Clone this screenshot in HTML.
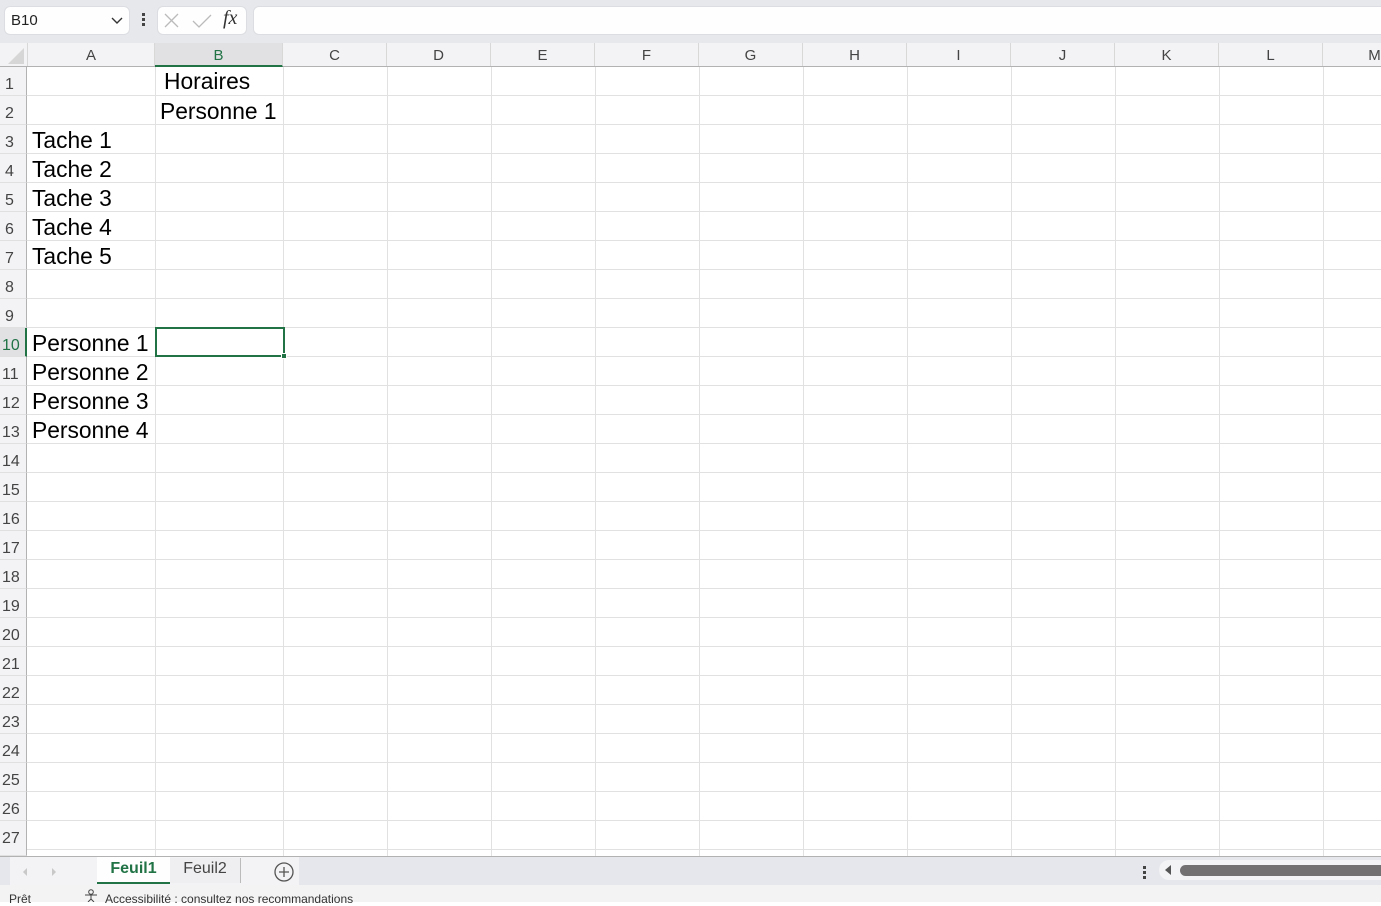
<!DOCTYPE html>
<html><head><meta charset="utf-8"><style>
*{margin:0;padding:0;box-sizing:border-box}
body{width:1381px;height:902px;overflow:hidden;background:#fff;font-family:"Liberation Sans",Arial,sans-serif;position:relative}
.a{position:absolute}
.top{left:0;top:0;width:1381px;height:43px;background:#e7e8ec}
.box{background:#fdfefd;border:1px solid #dcdde2;border-radius:6px}
.hdr{left:0;top:43px;width:1381px;height:24px;background:#f3f2f5;border-bottom:1px solid #b2b2b2}
.ch{top:43px;height:23px;font-size:15px;color:#444;text-align:center;line-height:26px;border-right:1px solid #d8d8d8}
.rh{left:0;width:27px;height:29px;font-size:16px;color:#444;background:#f3f2f5;border-right:1px solid #b2b2b2;border-bottom:1px solid #e0e0e0;padding-left:5px;line-height:35px}
.grid{left:27px;top:67px;width:1354px;height:789px;background:repeating-linear-gradient(to bottom,transparent 0,transparent 28px,#e1e1e1 28px,#e1e1e1 29px)}
.v{top:67px;width:1px;height:789px;background:#e1e1e1}
.t{font-size:22.8px;color:#000;white-space:nowrap}
</style></head><body>
<div class="a top"></div>
<div class="a box" style="left:4px;top:6px;width:126px;height:29px;"></div>
<div class="a" style="left:11px;top:12px;font-size:15px;color:#222">B10</div>
<svg class="a" style="left:110px;top:15px" width="14" height="10"><path d="M2 3 L7 8 L12 3" stroke="#333" stroke-width="1.4" fill="none"/></svg>
<div class="a" style="left:142px;top:13px;width:3px;height:3px;background:#444;box-shadow:0 5px 0 #444,0 10px 0 #444"></div>
<div class="a box" style="left:157px;top:6px;width:90px;height:29px;"></div>
<svg class="a" style="left:163px;top:12px" width="18" height="18"><path d="M2 2 L15 15 M15 2 L2 15" stroke="#bbb" stroke-width="1.3"/></svg>
<svg class="a" style="left:191px;top:12px" width="22" height="18"><path d="M2 9 L8 15 L20 3" stroke="#bbb" stroke-width="1.3" fill="none"/></svg>
<div class="a" style="left:223px;top:7px;font-family:'Liberation Serif',serif;font-style:italic;font-size:20px;color:#333">fx</div>
<div class="a box" style="left:253px;top:6px;width:1140px;height:29px;"></div>

<div class="a hdr"></div>
<svg class="a" style="left:6px;top:48px" width="18" height="16"><path d="M18 0 L18 16 L2 16 Z" fill="#d6d6d6"/></svg>
<div class="a ch" style="left:27px;width:128px;border-left:1px solid #d8d8d8">A</div>
<div class="a ch" style="left:155px;width:128px;background:#e1e1e4;color:#217346;border-bottom:2px solid #217346;height:24px">B</div>
<div class="a ch" style="left:283px;width:104px">C</div>
<div class="a ch" style="left:387px;width:104px">D</div>
<div class="a ch" style="left:491px;width:104px">E</div>
<div class="a ch" style="left:595px;width:104px">F</div>
<div class="a ch" style="left:699px;width:104px">G</div>
<div class="a ch" style="left:803px;width:104px">H</div>
<div class="a ch" style="left:907px;width:104px">I</div>
<div class="a ch" style="left:1011px;width:104px">J</div>
<div class="a ch" style="left:1115px;width:104px">K</div>
<div class="a ch" style="left:1219px;width:104px">L</div>
<div class="a ch" style="left:1323px;width:104px">M</div>

<div class="a grid"></div>
<div class="a v" style="left:155px"></div><div class="a v" style="left:283px"></div>
<div class="a v" style="left:387px"></div><div class="a v" style="left:491px"></div>
<div class="a v" style="left:595px"></div><div class="a v" style="left:699px"></div>
<div class="a v" style="left:803px"></div><div class="a v" style="left:907px"></div>
<div class="a v" style="left:1011px"></div><div class="a v" style="left:1115px"></div>
<div class="a v" style="left:1219px"></div><div class="a v" style="left:1323px"></div>

<div class="a rh" style="top:67px">1</div><div class="a rh" style="top:96px">2</div>
<div class="a rh" style="top:125px">3</div><div class="a rh" style="top:154px">4</div>
<div class="a rh" style="top:183px">5</div><div class="a rh" style="top:212px">6</div>
<div class="a rh" style="top:241px">7</div><div class="a rh" style="top:270px">8</div>
<div class="a rh" style="top:299px">9</div>
<div class="a rh" style="top:328px;background:#e1e1e4;color:#217346;border-right:2px solid #217346;padding-left:2px">10</div>
<div class="a rh" style="top:357px;padding-left:2px">11</div><div class="a rh" style="top:386px;padding-left:2px">12</div>
<div class="a rh" style="top:415px;padding-left:2px">13</div><div class="a rh" style="top:444px;padding-left:2px">14</div>
<div class="a rh" style="top:473px;padding-left:2px">15</div><div class="a rh" style="top:502px;padding-left:2px">16</div>
<div class="a rh" style="top:531px;padding-left:2px">17</div><div class="a rh" style="top:560px;padding-left:2px">18</div>
<div class="a rh" style="top:589px;padding-left:2px">19</div><div class="a rh" style="top:618px;padding-left:2px">20</div>
<div class="a rh" style="top:647px;padding-left:2px">21</div><div class="a rh" style="top:676px;padding-left:2px">22</div>
<div class="a rh" style="top:705px;padding-left:2px">23</div><div class="a rh" style="top:734px;padding-left:2px">24</div>
<div class="a rh" style="top:763px;padding-left:2px">25</div><div class="a rh" style="top:792px;padding-left:2px">26</div>
<div class="a rh" style="top:821px;padding-left:2px;height:35px">27</div>

<div class="a t" style="left:164px;top:68px">Horaires</div>
<div class="a t" style="left:160px;top:98px">Personne 1</div>
<div class="a t" style="left:32px;top:127px">Tache 1</div>
<div class="a t" style="left:32px;top:156px">Tache 2</div>
<div class="a t" style="left:32px;top:185px">Tache 3</div>
<div class="a t" style="left:32px;top:214px">Tache 4</div>
<div class="a t" style="left:32px;top:243px">Tache 5</div>
<div class="a t" style="left:32px;top:330px">Personne 1</div>
<div class="a t" style="left:32px;top:359px">Personne 2</div>
<div class="a t" style="left:32px;top:388px">Personne 3</div>
<div class="a t" style="left:32px;top:417px">Personne 4</div>

<div class="a" style="left:155px;top:327px;width:130px;height:30px;border:2px solid #217346"></div>
<div class="a" style="left:281px;top:353px;width:6px;height:6px;background:#217346;border:1px solid #fff"></div>

<div class="a" style="left:0;top:856px;width:1381px;height:29px;background:#e6e7ec;border-top:1px solid #b2b2b2"></div>
<div class="a" style="left:10px;top:857px;width:289px;height:28px;background:#f3f3f5"></div>
<svg class="a" style="left:20px;top:866px" width="40" height="12"><path d="M7 2 L3 6 L7 10Z M32 2 L36 6 L32 10Z" fill="#c8c8c8"/></svg>
<div class="a" style="left:97px;top:857px;width:73px;height:27px;background:#fdfefd;border-bottom:2px solid #217346;font-size:16px;font-weight:bold;color:#217346;text-align:center;line-height:24px">Feuil1</div>
<div class="a" style="left:170px;top:858px;width:71px;height:25px;background:#efeff1;border-right:1px solid #bbb;font-size:16px;color:#444;text-align:center;line-height:21px">Feuil2</div>
<svg class="a" style="left:273px;top:861px" width="22" height="22"><circle cx="11" cy="11" r="9" stroke="#555" stroke-width="1.3" fill="none"/><path d="M11 6 V16 M6 11 H16" stroke="#555" stroke-width="1.3"/></svg>
<div class="a" style="left:1143px;top:866px;width:3px;height:3px;background:#444;box-shadow:0 5px 0 #444,0 10px 0 #444"></div>
<div class="a" style="left:1159px;top:860px;width:230px;height:20px;background:#f3f3f5;border-radius:10px"></div>
<svg class="a" style="left:1163px;top:864px" width="10" height="12"><path d="M8 1 L2 6 L8 11Z" fill="#555"/></svg>
<div class="a" style="left:1180px;top:865px;width:210px;height:11px;background:#737072;border-radius:6px"></div>

<div class="a" style="left:0;top:885px;width:1381px;height:17px;background:#f3f3f3"></div>
<div class="a" style="left:9px;top:892px;font-size:12px;color:#333">Prêt</div>
<svg class="a" style="left:83px;top:889px" width="18" height="13"><circle cx="8" cy="3" r="2.3" stroke="#444" fill="none"/><path d="M2 6 H14 M8 6 V10 L5 13 M8 10 L11 13" stroke="#444" fill="none"/></svg>
<div class="a" style="left:105px;top:892px;font-size:12px;color:#333">Accessibilité : consultez nos recommandations</div>
</body></html>
